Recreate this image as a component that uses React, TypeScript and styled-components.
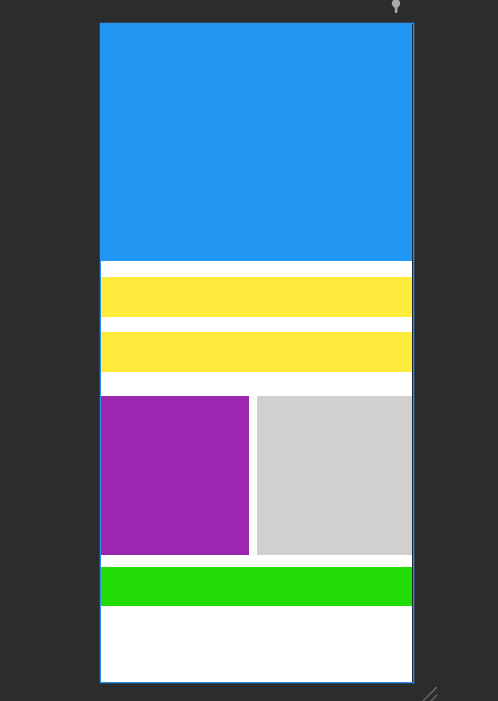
import React from 'react'
import styled, { createGlobalStyle } from 'styled-components'

const Global = createGlobalStyle`
   html, body {
      margin: 0;
      padding: 0;
      background: #2b2c2e;
      font-family: "Liberation Sans", Arial, sans-serif;
   }
`

const Page = styled.div`
   width: 498px;
   height: 701px;
   display: flex;
   flex-direction: column;
   overflow: hidden;
`

const TopBar = styled.div`
   height: 23px;
   display: flex;
   padding-left: 390px;
`

const Device = styled.div`
   margin-left: 100px;
   width: 312px;
   border: 1px solid #2a8fea;
   box-shadow: 0 0 0 1px rgba(33, 150, 243, 0.25);
   display: flex;
`

const Screen = styled.div`
   width: 311px;
   background: #ffffff;
   display: flex;
   flex-direction: column;
`

const Edge = styled.div`
   width: 1px;
   background: #1f2a35;
`

const Block = styled.div<{ $h: number; $color: string; $mt?: number }>`
   height: ${(p) => p.$h}px;
   margin-top: ${(p) => p.$mt ?? 0}px;
   background: ${(p) => p.$color};
`

const Row = styled.div`
   display: flex;
   gap: 8px;
   height: 159px;
   margin-top: 24px;
`

const Cell = styled.div<{ $w: number; $color: string }>`
   width: ${(p) => p.$w}px;
   background: ${(p) => p.$color};
`

const Filler = styled.div`
   height: 76px;
`

const BottomBar = styled.div`
   height: 18px;
   display: flex;
   align-items: flex-end;
   padding-left: 422px;
`

const Pin = () => (
   <svg width="12" height="14" viewBox="0 0 12 14">
      <circle cx="6" cy="3.5" r="4.2" fill="#a9aaac" />
      <rect x="4.8" y="5" width="2.6" height="8" rx="1" fill="#a9aaac" />
   </svg>
)

const Resize = () => (
   <svg width="16" height="16" viewBox="0 0 16 16">
      <line x1="1" y1="16" x2="15" y2="2" stroke="#6e6f72" strokeWidth="1.2" />
      <line x1="9" y1="16" x2="15" y2="10" stroke="#6e6f72" strokeWidth="1.2" />
   </svg>
)

const App: React.FC = () => (
   <>
      <Global />
      <Page>
         <TopBar>
            <Pin />
         </TopBar>
         <Device>
            <Screen>
               <Block $h={237} $color="#2196f3" />
               <Block $h={40} $mt={16} $color="#ffeb3b" />
               <Block $h={40} $mt={15} $color="#ffeb3b" />
               <Row>
                  <Cell $w={148} $color="#9c27b0" />
                  <Cell $w={155} $color="#d1cfd0" />
               </Row>
               <Block $h={39} $mt={12} $color="#21dc06" />
               <Filler />
            </Screen>
            <Edge />
         </Device>
         <BottomBar>
            <Resize />
         </BottomBar>
      </Page>
   </>
)

export default App
